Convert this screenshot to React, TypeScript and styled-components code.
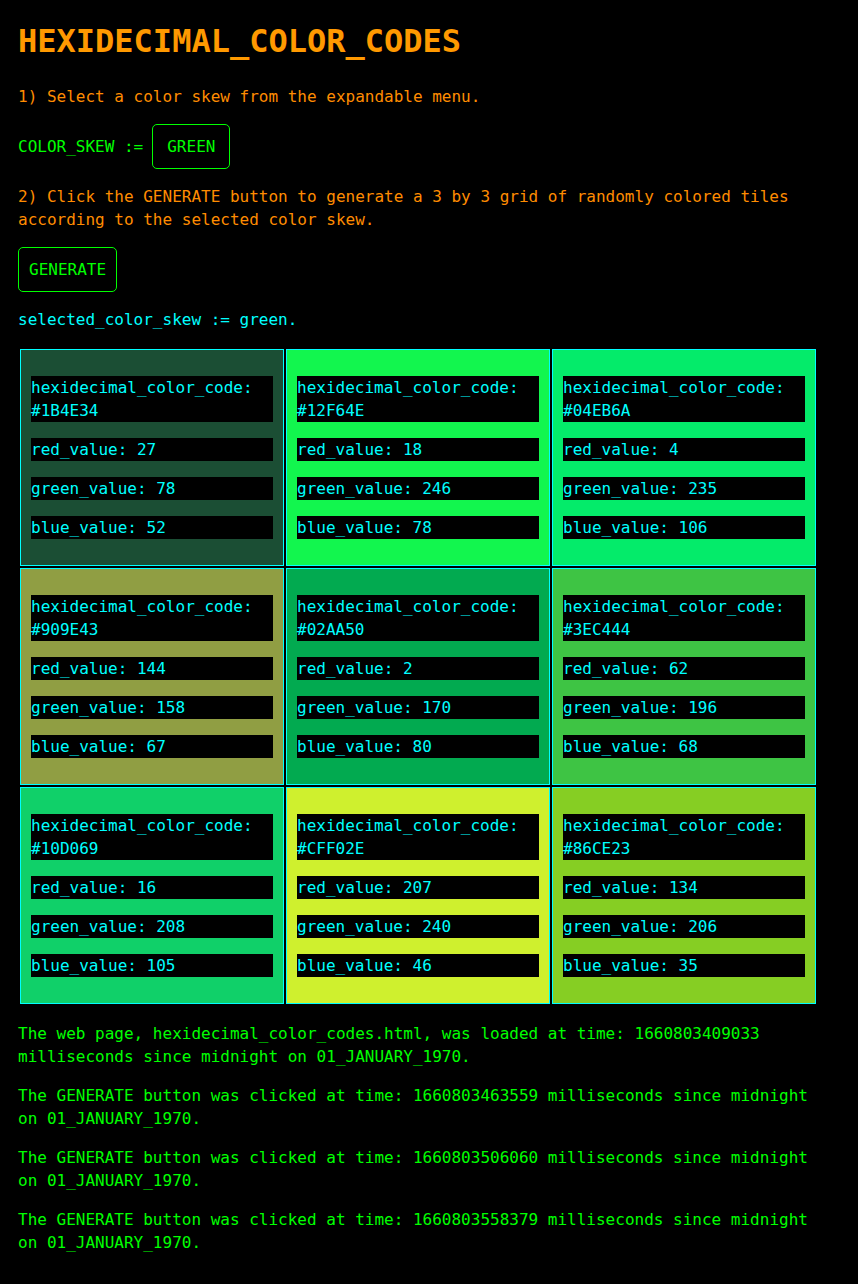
import React from "react";
import styled, { createGlobalStyle } from "styled-components";

const GlobalStyle = createGlobalStyle`
  html, body {
    margin: 0;
    padding: 0;
    background: #000000;
  }
  body {
    font-family: "DejaVu Sans Mono", "Liberation Mono", monospace;
    font-size: 16px;
    line-height: 23px;
  }
`;

const Page = styled.div`
  width: 800px;
  padding: 18px 18px 20px;
`;

const Title = styled.h1`
  margin: 0 0 21px;
  font-size: 32px;
  line-height: 46px;
  font-weight: bold;
  color: #ff9900;
`;

const Para = styled.p<{ $tone: "orange" | "green" | "cyan" }>`
  margin: 16px 0;
  color: ${(p) =>
    p.$tone === "orange" ? "#ff8c00" : p.$tone === "green" ? "#00ff00" : "#00ffff"};
`;

const ControlRow = styled.div`
  margin: 16px 0;
  display: flex;
  align-items: center;
  color: #00ff00;
  white-space: pre;
`;

const SkewBox = styled.div`
  display: inline-block;
  margin-left: 9px;
  padding: 10px 14px;
  border: 1px solid #00ff00;
  border-radius: 5px;
  color: #00ff00;
  background: #000000;
`;

const ButtonRow = styled.div`
  margin: 16px 0;
  display: flex;
`;

const GenerateButton = styled.button`
  margin: 0;
  padding: 10px 10px;
  border: 1px solid #00ff00;
  border-radius: 5px;
  background: #000000;
  color: #00ff00;
  font-family: inherit;
  font-size: 16px;
  line-height: 23px;
  cursor: pointer;
`;

const Grid = styled.div`
  display: grid;
  grid-template-columns: repeat(3, 264px);
  gap: 2px;
  padding: 2px;
  margin: 16px 0;
  width: max-content;
`;

const Tile = styled.div<{ $bg: string }>`
  box-sizing: border-box;
  border: 1px solid #00ffff;
  padding: 10px;
  background: ${(p) => p.$bg};
`;

const Field = styled.p`
  margin: 16px 0;
  background: #000000;
  color: #00ffff;
`;

const tiles = [
  { hex: "#1B4E34", r: 27, g: 78, b: 52 },
  { hex: "#12F64E", r: 18, g: 246, b: 78 },
  { hex: "#04EB6A", r: 4, g: 235, b: 106 },
  { hex: "#909E43", r: 144, g: 158, b: 67 },
  { hex: "#02AA50", r: 2, g: 170, b: 80 },
  { hex: "#3EC444", r: 62, g: 196, b: 68 },
  { hex: "#10D069", r: 16, g: 208, b: 105 },
  { hex: "#CFF02E", r: 207, g: 240, b: 46 },
  { hex: "#86CE23", r: 134, g: 206, b: 35 },
];

const clicks = ["1660803463559", "1660803506060", "1660803558379"];

export default function App() {
  return (
    <>
      <GlobalStyle />
      <Page>
        <Title>HEXIDECIMAL_COLOR_CODES</Title>
        <Para $tone="orange">1) Select a color skew from the expandable menu.</Para>
        <ControlRow>
          COLOR_SKEW :=<SkewBox>GREEN</SkewBox>
        </ControlRow>
        <Para $tone="orange">
          2) Click the GENERATE button to generate a 3 by 3 grid of randomly colored tiles
          according to the selected color skew.
        </Para>
        <ButtonRow>
          <GenerateButton>GENERATE</GenerateButton>
        </ButtonRow>
        <Para $tone="cyan">selected_color_skew := green.</Para>
        <Grid>
          {tiles.map((t) => (
            <Tile key={t.hex} $bg={t.hex}>
              <Field>
                hexidecimal_color_code:
                <br />
                {t.hex}
              </Field>
              <Field>red_value: {t.r}</Field>
              <Field>green_value: {t.g}</Field>
              <Field>blue_value: {t.b}</Field>
            </Tile>
          ))}
        </Grid>
        <Para $tone="green">
          The web page, hexidecimal_color_codes.html, was loaded at time: 1660803409033
          milliseconds since midnight on 01_JANUARY_1970.
        </Para>
        {clicks.map((c) => (
          <Para key={c} $tone="green">
            The GENERATE button was clicked at time: {c} milliseconds since midnight on
            01_JANUARY_1970.
          </Para>
        ))}
      </Page>
    </>
  );
}
